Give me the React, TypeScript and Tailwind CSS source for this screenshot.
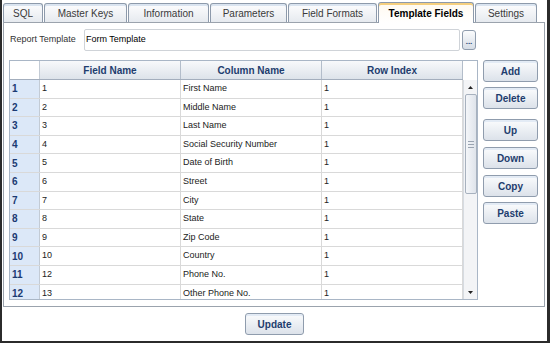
import React from "react";

const tabs = [
  { label: "SQL", w: "w-[40px]", active: false },
  { label: "Master Keys", w: "w-[83px]", active: false },
  { label: "Information", w: "w-[81px]", active: false },
  { label: "Parameters", w: "w-[77px]", active: false },
  { label: "Field Formats", w: "w-[89px]", active: false },
  { label: "Template Fields", w: "w-[96px]", active: true },
  { label: "Settings", w: "w-[62px]", active: false },
];

const rows = [
  ["1", "1", "First Name"],
  ["2", "2", "Middle Name"],
  ["3", "3", "Last Name"],
  ["4", "4", "Social Security Number"],
  ["5", "5", "Date of Birth"],
  ["6", "6", "Street"],
  ["7", "7", "City"],
  ["8", "8", "State"],
  ["9", "9", "Zip Code"],
  ["10", "10", "Country"],
  ["11", "12", "Phone No."],
  ["12", "13", "Other Phone No."],
];

const sideButtons = [
  { label: "Add", mt: "mt-0" },
  { label: "Delete", mt: "mt-[5px]" },
  { label: "Up", mt: "mt-[10px]" },
  { label: "Down", mt: "mt-[6px]" },
  { label: "Copy", mt: "mt-[6px]" },
  { label: "Paste", mt: "mt-[5px]" },
];

function Btn({ label, className = "" }: { label: string; className?: string }) {
  return (
    <button
      className={`h-[22px] rounded-[3px] border border-[#8f9cad] bg-linear-to-b from-[#fbfcfd] to-[#dce2ea] shadow-[inset_0_2px_0_#e3ebf5] text-[10px] font-bold text-[#1e3d6e] ${className}`}
    >
      {label}
    </button>
  );
}

export default function App() {
  return (
    <div className="w-[550px] h-[343px] bg-white border-l-2 border-r-[3px] border-b-2 border-[#2b2b2b] font-['Liberation_Sans',Arial,sans-serif] overflow-hidden">
      {/* Tab strip */}
      <div className="flex items-end gap-[1px] h-[20px] mt-[2px] pl-[1px]">
        {tabs.map((t) =>
          t.active ? (
            <div
              key={t.label}
              className={`${t.w} relative z-10 -mb-px h-[21px] flex items-center justify-center rounded-t-[3px] border border-b-0 border-[#8d9aab] bg-linear-to-b from-[#fffaf0] to-white shadow-[inset_0_2px_0_#f5cf7e] text-[10px] font-bold text-black`}
            >
              {t.label}
            </div>
          ) : (
            <div
              key={t.label}
              className={`${t.w} h-[19px] flex items-center justify-center rounded-t-[3px] border border-b-0 border-[#8d9aab] bg-linear-to-b from-[#fdfdfe] to-[#e6eaef] shadow-[inset_0_2px_0_#dae4f0] text-[10px] text-[#3a3a3a]`}
            >
              {t.label}
            </div>
          )
        )}
      </div>

      {/* Panel */}
      <div className="ml-[1px] w-[542px] h-[285px] border border-[#9ba3ad] bg-white">
        {/* Report template row */}
        <div className="flex items-center mt-[6px] h-[22px]">
          <span className="ml-[6px] w-[74px] text-[9px] text-[#333]">Report Template</span>
          <div className="w-[376px] h-[22px] flex items-center pl-[1px] rounded-[2px] border border-[#cfd3d8] text-[9px] text-black">
            Form Template
          </div>
          <button className="ml-[2px] w-[14px] h-[20px] rounded-[3px] border border-[#8f9cad] bg-linear-to-b from-[#fbfcfd] to-[#d6dde6] flex items-end justify-center pb-[3px] text-[8px] font-bold leading-none text-[#1e3d6e]">
            ...
          </button>
        </div>

        {/* Grid + side buttons */}
        <div className="flex mt-[9px]">
          <div className="ml-[5px] w-[469px] h-[240px] border border-[#a9b6c6] flex overflow-hidden">
            <div className="w-[453px] flex flex-col">
              {/* header */}
              <div className="flex h-[19px] shrink-0 border-b border-[#a3aebd]">
                <div className="w-[30px] bg-white border-r border-[#c3cbd5]" />
                {["Field Name", "Column Name", "Row Index"].map((h) => (
                  <div
                    key={h}
                    className="w-[141px] flex items-center justify-center border-r border-[#b3bdca] bg-linear-to-b from-[#f8f9fb] to-[#dde3ea] text-[10px] font-bold text-[#1e3d6e]"
                  >
                    {h}
                  </div>
                ))}
              </div>
              {rows.map(([n, f, c]) => (
                <div key={n} className="flex h-[18.6px] shrink-0 border-b border-[#d9d9d9]">
                  <div className="w-[30px] flex items-center pl-[2px] bg-[#dce8f8] border-r border-[#c3cbd5] text-[10px] font-bold text-[#1b3a73]">
                    {n}
                  </div>
                  <div className="w-[141px] flex items-center pl-[2px] border-r border-[#d9d9d9] text-[9px] text-[#222]">{f}</div>
                  <div className="w-[141px] flex items-center pl-[2px] border-r border-[#d9d9d9] text-[9px] text-[#222]">{c}</div>
                  <div className="w-[141px] flex items-center pl-[2px] border-r border-[#d9d9d9] text-[9px] text-[#222]">1</div>
                </div>
              ))}
            </div>

            {/* scrollbar */}
            <div className="w-[14px] flex flex-col">
              <div className="h-[19px] shrink-0 bg-white" />
              <div className="flex-1 flex flex-col items-center bg-[#f3f4f6] border-l border-[#d6dbe1]">
                <svg width="5" height="3" viewBox="0 0 5 3" className="mt-[6px]">
                  <path d="M2.5 0 L5 3 L0 3 Z" fill="#222" />
                </svg>
                <div className="mt-[5px] w-[12px] h-[100px] rounded-[2px] border border-[#a7b1be] bg-linear-to-r from-[#f4f6f9] to-[#dfe4eb] flex flex-col items-center justify-center gap-[2px]">
                  <div className="w-[6px] h-px bg-[#9aa4b1]" />
                  <div className="w-[6px] h-px bg-[#9aa4b1]" />
                  <div className="w-[6px] h-px bg-[#9aa4b1]" />
                </div>
                <div className="flex-1" />
                <svg width="5" height="3" viewBox="0 0 5 3" className="mb-[5px]">
                  <path d="M0 0 L5 0 L2.5 3 Z" fill="#222" />
                </svg>
              </div>
            </div>
          </div>

          <div className="ml-[5px] flex flex-col">
            {sideButtons.map((b) => (
              <Btn key={b.label} label={b.label} className={`w-[55px] ${b.mt}`} />
            ))}
          </div>
        </div>
      </div>

      {/* Footer */}
      <div className="flex justify-center mt-[6px]">
        <Btn label="Update" className="w-[59px]" />
      </div>
    </div>
  );
}
